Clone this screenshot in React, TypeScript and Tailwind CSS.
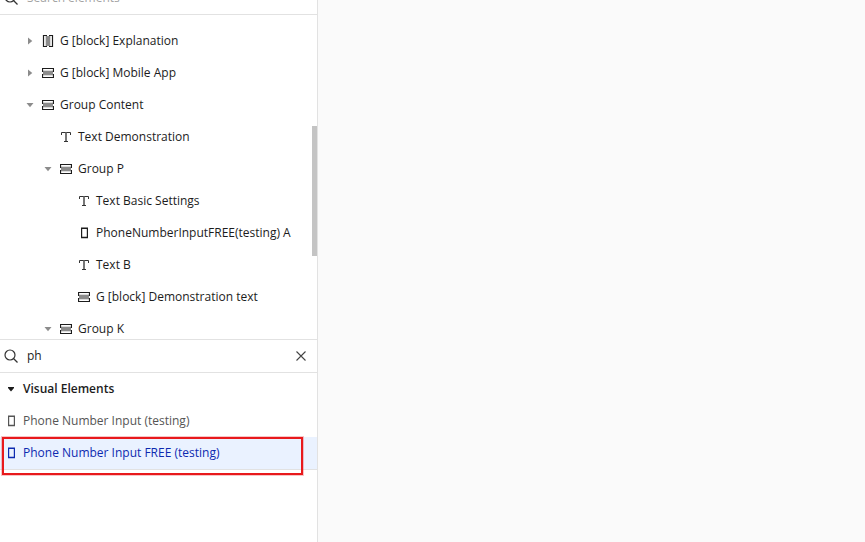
import { useState } from "react";

type IconKind = "columns" | "rows" | "text" | "phone";
type Arrow = "right" | "down" | null;

interface TreeNode {
  label: string;
  icon: IconKind;
  arrow: Arrow;
  depth: 0 | 1 | 2;
}

const nodes: TreeNode[] = [
  { label: "G [block] Explanation", icon: "columns", arrow: "right", depth: 0 },
  { label: "G [block] Mobile App", icon: "rows", arrow: "right", depth: 0 },
  { label: "Group Content", icon: "rows", arrow: "down", depth: 0 },
  { label: "Text Demonstration", icon: "text", arrow: null, depth: 1 },
  { label: "Group P", icon: "rows", arrow: "down", depth: 1 },
  { label: "Text Basic Settings", icon: "text", arrow: null, depth: 2 },
  { label: "PhoneNumberInputFREE(testing) A", icon: "phone", arrow: null, depth: 2 },
  { label: "Text B", icon: "text", arrow: null, depth: 2 },
  { label: "G [block] Demonstration text", icon: "rows", arrow: null, depth: 2 },
  { label: "Group K", icon: "rows", arrow: "down", depth: 1 },
];

const indent = { 0: "pl-6", 1: "pl-[42px]", 2: "pl-[60px]" };

function PhoneIcon() {
  return (
    <svg width="8" height="12" viewBox="0 0 8 12" fill="none" stroke="currentColor" aria-hidden="true">
      <path d="M1.6 1v10M7.4 1v10" strokeWidth="1.2" />
      <path d="M1 1.25h7M1 10.5h7" strokeWidth="1.6" />
    </svg>
  );
}

function NodeIcon({ kind }: { kind: IconKind }) {
  if (kind === "phone") return <PhoneIcon />;
  if (kind === "text") {
    return (
      <svg width="12" height="12" viewBox="0 0 12 12" fill="none" aria-hidden="true">
        <path d="M1.5 4V1.5h9V4" stroke="#333" />
        <path d="M6 1.5v9" stroke="#777" strokeWidth="2" />
        <path d="M4 10.5h4" stroke="#333" />
      </svg>
    );
  }
  return (
    <svg
      width="12"
      height="12"
      viewBox="0 0 12 12"
      fill="none"
      className={kind === "columns" ? "rotate-90" : ""}
      aria-hidden="true"
    >
      <rect x="1" y="3.7" width="10" height="4.6" fill="#8c8c8c" />
      <path d="M.5 5v-3.5h11v3.5M.5 7v3.5h11v-3.5" stroke="#1c1c1c" strokeWidth="1.2" />
    </svg>
  );
}

function ArrowIcon({ direction }: { direction: Arrow }) {
  return (
    <svg width="12" height="12" viewBox="0 0 12 12" fill="#8c8c8c" aria-hidden="true">
      {direction === "right" && <path d="M4 2.5v7L8.3 6z" />}
      {direction === "down" && <path d="M2.5 4h7L6 8.3z" />}
    </svg>
  );
}

function SearchIcon() {
  return (
    <svg width="14" height="14" viewBox="0 0 14 14" fill="none" stroke="#333" strokeWidth="1.2" aria-hidden="true">
      <circle cx="6" cy="6" r="5" />
      <path d="M9.5 9.5l4 4" />
    </svg>
  );
}

function Tree() {
  return (
    <div className="relative h-[325px] overflow-hidden border-b border-[#e2e2e2] pt-2.5">
      <ul>
        {nodes.map((node) => (
          <li key={node.label}>
            <button type="button" className={`flex h-8 w-full items-center text-left ${indent[node.depth]}`}>
              <ArrowIcon direction={node.arrow} />
              <span className="ml-1.5 mr-1.5 flex w-3 justify-center">
                <NodeIcon kind={node.icon} />
              </span>
              <span className="whitespace-nowrap">{node.label}</span>
            </button>
          </li>
        ))}
      </ul>
      <div className="absolute right-0 top-[111px] h-[130px] w-[5px] bg-[#c4c4c4]" />
    </div>
  );
}

export default function App() {
  const [query, setQuery] = useState("ph");

  return (
    <div className="flex h-screen overflow-hidden bg-[#fafafa] font-['Open_Sans','Noto_Sans',sans-serif] text-xs leading-5 text-[#1c1c1c]">
      <aside className="w-[318px] shrink-0 border-r border-[#e2e2e2] bg-white">
        <label className="-mt-[18px] flex h-[33px] items-center gap-2 border-b border-[#e2e2e2] pl-1">
          <SearchIcon />
          <input
            type="text"
            aria-label="Search elements"
            placeholder="Search elements"
            className="min-w-0 flex-1 pl-px outline-none placeholder:text-[#a3a3a3]"
          />
        </label>

        <Tree />

        <div className="flex h-[33px] items-center gap-2 border-b border-[#e2e2e2] pl-1 pr-[11px]">
          <SearchIcon />
          <input
            type="text"
            aria-label="Search palette"
            value={query}
            onChange={(event) => setQuery(event.target.value)}
            className="min-w-0 flex-1 pl-px outline-none"
          />
          <button type="button" aria-label="Clear search" onClick={() => setQuery("")}>
            <svg width="10" height="10" viewBox="0 0 10 10" fill="none" stroke="#444" strokeWidth="1.1">
              <path d="M.5.5l9 9M9.5.5l-9 9" />
            </svg>
          </button>
        </div>

        <section>
          <button type="button" className="flex h-8 w-full items-center gap-2 pl-[7px] text-left font-semibold">
            <svg width="8" height="8" viewBox="0 0 8 8" fill="#1c1c1c" aria-hidden="true">
              <path d="M1 2h6v1L4 6.5 1 3z" />
            </svg>
            Visual Elements
          </button>
          <button type="button" className="flex h-8 w-full items-center gap-2 pl-[7px] text-left text-[#555]">
            <PhoneIcon />
            Phone Number Input (testing)
          </button>
          <div className="relative">
            <button
              type="button"
              className="flex h-[33px] w-full items-center gap-2 border-b border-[#e2e2e2] bg-[#eaf2ff] pl-[7px] text-left text-[#0d2ab0]"
            >
              <PhoneIcon />
              Phone Number Input FREE (testing)
            </button>
            <div className="pointer-events-none absolute left-0.5 top-0 h-[38px] w-[301px] border-2 border-[#e8191c] ring-1 ring-[#e8191c]/25" />
          </div>
        </section>
      </aside>
      <main className="flex-1" />
    </div>
  );
}
